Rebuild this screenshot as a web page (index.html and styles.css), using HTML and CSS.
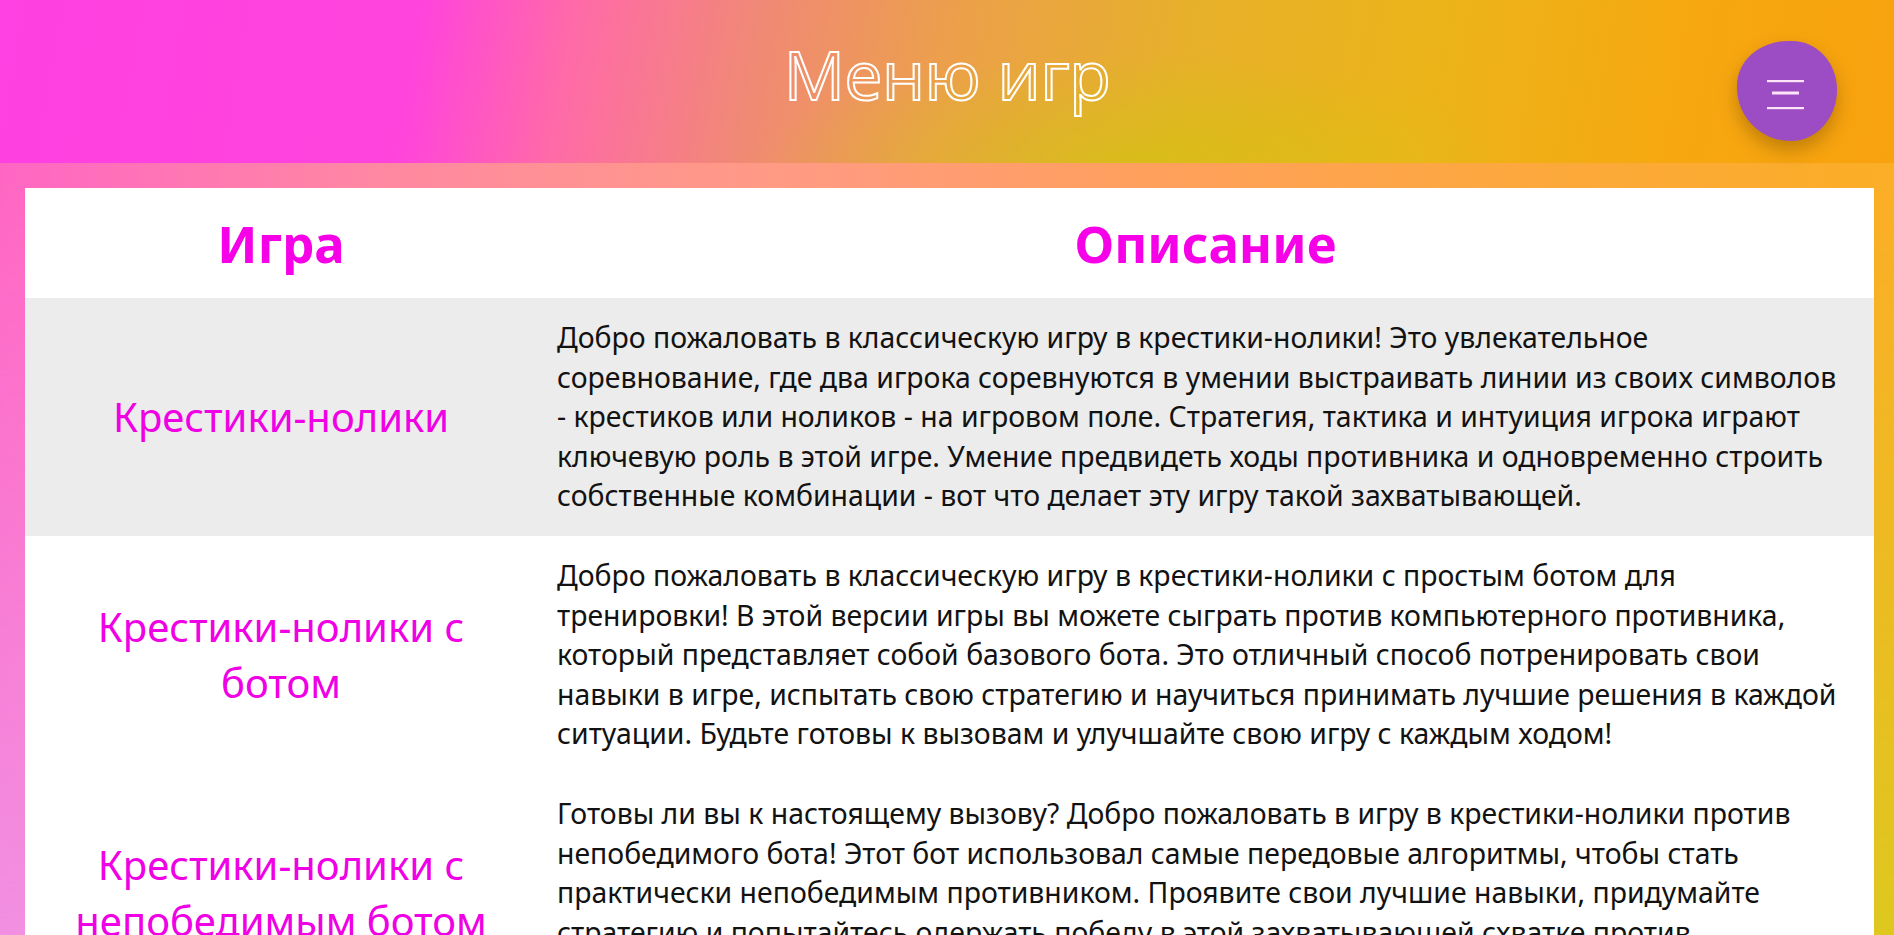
FILE: index.html
```html
<!DOCTYPE html>
<html lang="ru">
<head>
<meta charset="utf-8">
<title>Меню игр</title>
<link rel="stylesheet" href="styles.css">
</head>
<body>
<div class="bg-fade"></div>
<header class="top">
  <h1 class="title">Меню игр</h1>
  <button class="menu-btn" aria-label="Меню">
    <svg class="menu-icon" viewBox="0 0 100 100" width="100" height="100">
      <rect x="30" y="39" width="37" height="2.2" fill="#fde4f6"/>
      <rect x="35" y="50.5" width="27" height="3" fill="#fde4f6"/>
      <rect x="30" y="66" width="37" height="2.2" fill="#fde4f6"/>
    </svg>
  </button>
</header>
<main class="content">
  <table class="games">
    <colgroup>
      <col class="col-game">
      <col class="col-desc">
    </colgroup>
    <thead>
      <tr>
        <th>Игра</th>
        <th>Описание</th>
      </tr>
    </thead>
    <tbody>
      <tr class="row-alt">
        <td class="game-name">Крестики-нолики</td>
        <td class="game-desc">Добро пожаловать в классическую игру в крестики-нолики! Это увлекательное соревнование, где два игрока соревнуются в умении выстраивать линии из своих символов - крестиков или ноликов - на игровом поле. Стратегия, тактика и интуиция игрока играют ключевую роль в этой игре. Умение предвидеть ходы противника и одновременно строить собственные комбинации - вот что делает эту игру такой захватывающей.</td>
      </tr>
      <tr>
        <td class="game-name">Крестики-нолики с ботом</td>
        <td class="game-desc">Добро пожаловать в классическую игру в крестики-нолики с простым ботом для тренировки! В этой версии игры вы можете сыграть против компьютерного противника, который представляет собой базового бота. Это отличный способ потренировать свои навыки в игре, испытать свою стратегию и научиться принимать лучшие решения в каждой ситуации. Будьте готовы к вызовам и улучшайте свою игру с каждым ходом!</td>
      </tr>
      <tr>
        <td class="game-name">Крестики-нолики с непобедимым ботом</td>
        <td class="game-desc">Готовы ли вы к настоящему вызову? Добро пожаловать в игру в крестики-нолики против непобедимого бота! Этот бот использовал самые передовые алгоритмы, чтобы стать практически непобедимым противником. Проявите свои лучшие навыки, придумайте стратегию и попытайтесь одержать победу в этой захватывающей схватке против искусственного интеллекта. Удачи!</td>
      </tr>
    </tbody>
  </table>
</main>
</body>
</html>
```

FILE: styles.css
```css
html {
  background: linear-gradient(to right, #f290e2 0%, #f6a0b0 40%, #e8b860 70%, #dec81e 100%);
  min-height: 100%;
}

body {
  margin: 0;
  font-family: "Noto Sans", "Open Sans", "DejaVu Sans", sans-serif;
  color: #111;
  position: relative;
  min-height: 100vh;
}

.bg-fade {
  position: fixed;
  inset: 0;
  z-index: -1;
  background: linear-gradient(to right, #ff66c4 0%, #ff88a2 20%, #ff9a86 40%, #ffa05e 60%, #fca83e 80%, #fbae26 100%);
  -webkit-mask-image: linear-gradient(to bottom, #000 20%, transparent 100%);
  mask-image: linear-gradient(to bottom, #000 20%, transparent 100%);
}

.top {
  position: relative;
  height: 163px;
  display: flex;
  align-items: center;
  justify-content: center;
  background:
    radial-gradient(ellipse 380px 110px at 60% 100%, rgba(205, 200, 10, 0.55), rgba(205, 200, 10, 0) 100%),
    linear-gradient(100deg, #ff40e2 0%, #ff44dc 22%, #ff6aa8 30%, #f08a74 40%, #eca04a 50%, #e6b02a 62%, #ecb41a 75%, #f6a810 88%, #f8a20e 100%);
}

.title {
  margin: 0 0 16px 0;
  font-family: "Open Sans", "Noto Sans", sans-serif;
  font-weight: 400;
  font-size: 68px;
  line-height: 1;
  color: transparent;
  -webkit-text-stroke: 2px #ffffff;
  letter-spacing: -0.5px;
}

.menu-btn {
  position: absolute;
  top: 41px;
  right: 57px;
  width: 100px;
  height: 100px;
  padding: 0;
  border: none;
  background: #9c4dc4;
  border-radius: 52% 46% 48% 55% / 46% 50% 52% 55%;
  box-shadow: 0 9px 18px rgba(110, 70, 0, 0.4);
  cursor: pointer;
}

.menu-icon {
  display: block;
}

.content {
  padding: 25px 20px 25px 25px;
}

.games {
  width: 100%;
  table-layout: fixed;
  border-collapse: collapse;
  background: #ffffff;
}

.col-game {
  width: 512px;
}

.games th {
  color: #f600e8;
  font-weight: 700;
  font-size: 51px;
  line-height: 72px;
  padding: 19px 20px 19px;
  text-align: center;
}

.games td {
  padding: 20px;
  vertical-align: middle;
}

.game-name {
  color: #f000e4;
  font-size: 40px;
  line-height: 56px;
  text-align: center;
}

.games .game-desc {
  font-size: 28.4px;
  line-height: 39.6px;
  color: #121212;
  padding-right: 28px;
}

.row-alt {
  background: #ececec;
}
```
